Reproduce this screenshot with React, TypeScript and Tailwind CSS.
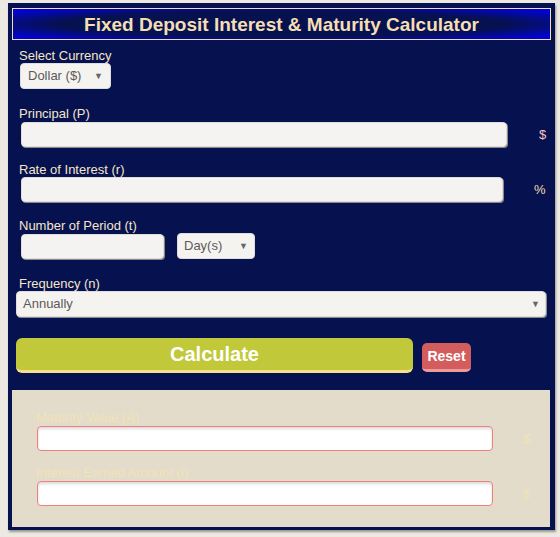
import React from "react";

const font = { fontFamily: '"Liberation Sans", Arial, sans-serif' };

function Label({ children }: { children: React.ReactNode }) {
  return <div className="text-[13px] leading-[15px] text-[#f5e6c8]">{children}</div>;
}

function Arrow() {
  return <span className="text-[9px] text-[#666] leading-none">▼</span>;
}

export default function App() {
  return (
    <div style={font} className="min-h-[537px] w-[560px] bg-[#ece9e2] pl-[8px] pt-[3px]">
      <div className="w-[547px] h-[527px] bg-[#06114f] p-[4px] pt-[5px] shadow-[1px_2px_2px_#9a978f]">
        {/* TITLE */}
        <div className="h-[32px] border border-[#f5deb3] flex items-center justify-center bg-[radial-gradient(ellipse_at_center,#06114f_58%,#0000f5_100%)]">
          <h1 className="text-[19px] font-bold text-[#f5deb3] leading-none">
            Fixed Deposit Interest &amp; Maturity Calculator
          </h1>
        </div>

        {/* FORM */}
        <div className="pl-[7px] pt-[8px]">
          <Label>Select Currency</Label>
          <div className="ml-[1px] w-[91px] h-[26px] rounded-[4px] bg-[#f5f3f0] border border-[#ddd] flex items-center justify-between px-[7px] text-[13px] text-[#5a5a5a]">
            <span>Dollar ($)</span>
            <Arrow />
          </div>

          <div className="mt-[17px]">
            <Label>Principal (P)</Label>
            <div className="mt-[1px] flex items-center">
              <div className="ml-[2px] w-[486px] h-[25px] rounded-[4px] bg-[#f5f3f1] border border-[#e0ddd8] shadow-[1px_1px_0_#8a8a8a]" />
              <span className="ml-[32px] text-[13px] text-[#f7c4c4]">$</span>
            </div>
          </div>

          <div className="mt-[15px]">
            <Label>Rate of Interest (r)</Label>
            <div className="flex items-center">
              <div className="ml-[2px] w-[482px] h-[25px] rounded-[4px] bg-[#f5f3f1] border border-[#e0ddd8] shadow-[1px_1px_0_#8a8a8a]" />
              <span className="ml-[31px] text-[13px] text-[#f5deb3]">%</span>
            </div>
          </div>

          <div className="mt-[16px]">
            <Label>Number of Period (t)</Label>
            <div className="flex items-center">
              <div className="ml-[2px] w-[143px] h-[25px] rounded-[4px] bg-[#f5f3f1] border border-[#e0ddd8] shadow-[1px_1px_0_#8a8a8a]" />
              <div className="ml-[13px] w-[78px] h-[26px] rounded-[4px] bg-[#f5f3f0] border border-[#ddd] flex items-center justify-between px-[6px] text-[13px] text-[#5a5a5a]">
                <span>Day(s)</span>
                <Arrow />
              </div>
            </div>
          </div>

          <div className="mt-[17px] -ml-[3px]">
            <div className="pl-[3px]">
              <Label>Frequency (n)</Label>
            </div>
            <div className="w-[530px] h-[26px] rounded-[4px] bg-[#f5f3f0] border border-[#ddd] shadow-[1px_1px_0_#8a8a8a] flex items-center justify-between pl-[6px] pr-[5px] text-[13px] text-[#5a5a5a]">
              <span>Annually</span>
              <Arrow />
            </div>

            <div className="mt-[21px] flex items-end gap-[9px] pb-[17px]">
              <button className="w-[397px] h-[35px] rounded-[6px] bg-[#c1c83a] border-b-[3px] border-[#f7df8c] text-white font-bold text-[20px]">
                Calculate
              </button>
              <button className="w-[49px] h-[29px] mb-[1px] rounded-[5px] bg-[#d35c5c] border-b-[3px] border-[#ef9a9a] text-white font-bold text-[14px]">
                Reset
              </button>
            </div>
          </div>
        </div>

        {/* RESULTS */}
        <div className="w-[538px] h-[137px] bg-[#e3dccb] pl-[24px] pt-[20px]">
          <div className="text-[13px] leading-[15px] text-[#f2e2b6]">Maturity Value (A)</div>
          <div className="mt-[1px] flex items-center">
            <div className="ml-[1px] w-[456px] h-[25px] rounded-[4px] bg-white border border-[#f08080] shadow-[inset_0_2px_3px_rgba(0,0,0,0.15)]" />
            <span className="ml-[30px] text-[13px] text-[#f2e2b6]">$</span>
          </div>
          <div className="mt-[14px] text-[13px] leading-[15px] text-[#f2e2b6]">Interest Earned Amount (I)</div>
          <div className="mt-[1px] flex items-center">
            <div className="ml-[1px] w-[456px] h-[25px] rounded-[4px] bg-white border border-[#f08080] shadow-[inset_0_2px_3px_rgba(0,0,0,0.15)]" />
            <span className="ml-[30px] text-[13px] text-[#f2e2b6]">$</span>
          </div>
        </div>
      </div>
    </div>
  );
}
